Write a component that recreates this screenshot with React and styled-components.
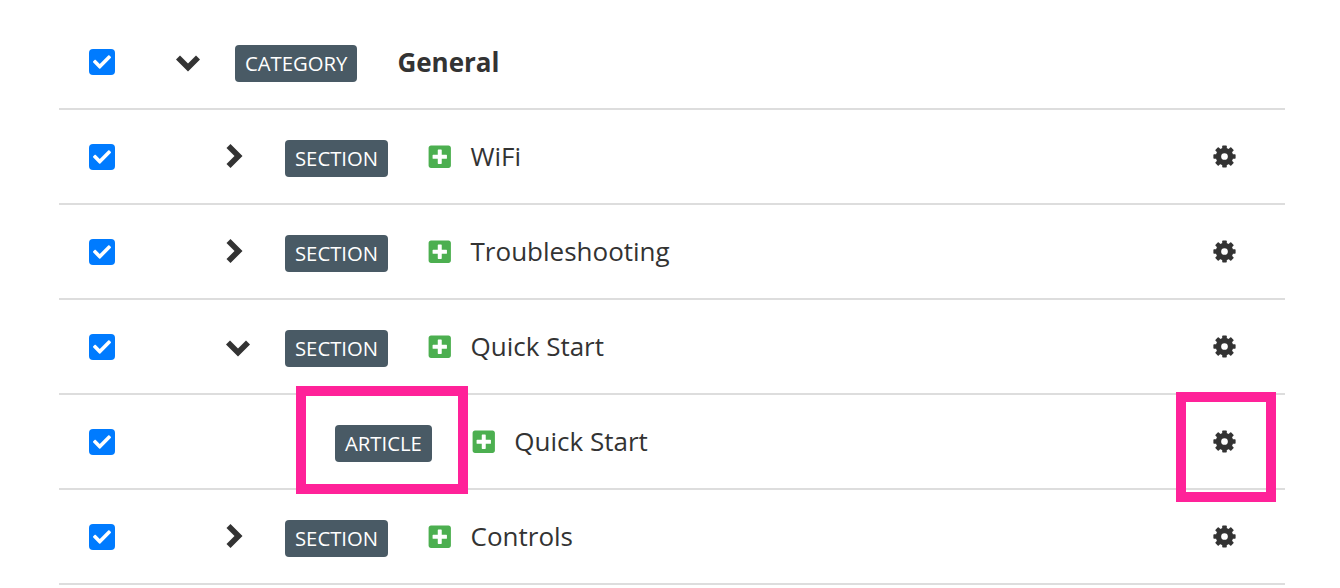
import React from "react";
import styled, { createGlobalStyle } from "styled-components";
import { FaCheck, FaPlusSquare } from "react-icons/fa";

const Global = createGlobalStyle`
  html, body { margin: 0; padding: 0; background: #fff; }
  body { font-family: "Open Sans", "Liberation Sans", sans-serif; color: #333; }
`;

const Page = styled.div`
  position: relative;
  width: 1340px;
  height: 588px;
  overflow: hidden;
  padding: 15px 55px 0 59px;
  box-sizing: border-box;
`;

const Row = styled.div`
  display: flex;
  align-items: center;
  height: 95px;
  box-sizing: border-box;
  padding: 0 49px 0 30px;
  border-bottom: 2px solid #ddd;
`;

const Check = styled.span`
  flex: none;
  width: 26px;
  height: 26px;
  border-radius: 4px;
  background: #007bff;
  color: #fff;
  display: flex;
  align-items: center;
  justify-content: center;
  font-size: 18px;
`;

const Toggle = styled.span`
  flex: none;
  display: flex;
  align-items: center;
  width: 59px;
  margin-left: ${(p) => p.$indent}px;
`;

const Chevron = styled.svg`
  display: block;
  fill: #333;
  margin-top: ${(p) => p.$drop}px;
`;

const Badge = styled.span`
  flex: none;
  box-sizing: border-box;
  height: 37px;
  line-height: 37px;
  margin-top: 4px;
  padding: 0 10px;
  border-radius: 4px;
  background: #495a65;
  color: #fff;
  font-size: 20.3px;
`;

const Plus = styled.span`
  flex: none;
  display: flex;
  margin-left: 39px;
  margin-right: 18px;
  font-size: 25.5px;
  color: #4caf50;
`;

const Name = styled.span`
  flex: 1;
  font-size: 26px;
  color: #333;
  line-height: 34px;
  margin-bottom: 2px;
`;

const CategoryName = styled(Name)`
  margin-left: 40px;
  margin-bottom: 0;
  font-weight: 700;
`;

const GearIcon = styled.svg`
  flex: none;
  display: block;
  width: 23px;
  height: 23px;
  fill: #333;
`;

const Highlight = styled.div`
  position: absolute;
  box-sizing: border-box;
  border: 10px solid #ff2299;
  left: ${(p) => p.$x}px;
  top: ${(p) => p.$y}px;
  width: ${(p) => p.$w}px;
  height: ${(p) => p.$h}px;
`;

const Spacer = styled.span`
  flex: none;
  width: 220px;
`;

const ChevronDown = () => (
  <Chevron $drop={4} width="24" height="17" viewBox="0 0 24 17">
    <polygon points="0,4.5 4,0.5 12,8.5 20,0.5 24,4.5 12,16.5" />
  </Chevron>
);

const ChevronRight = () => (
  <Chevron $drop={-2} width="17" height="24" viewBox="0 0 17 24">
    <polygon points="4.5,0 16.5,12 4.5,24 0.5,20 8.5,12 0.5,4" />
  </Chevron>
);

const Gear = () => (
  <GearIcon viewBox="0 0 24 24">
    <circle cx="12" cy="12" r="6.3" fill="none" stroke="#333" strokeWidth="5.6" />
    {[0, 45, 90, 135, 180, 225, 270, 315].map((a) => (
      <rect key={a} x="9.6" y="0.4" width="4.8" height="5" rx="0.8" transform={`rotate(${a} 12 12)`} />
    ))}
  </GearIcon>
);

function Item({ open, type, name, article }) {
  return (
    <Row>
      <Check><FaCheck /></Check>
      {article ? (
        <Spacer />
      ) : (
        <Toggle $indent={111}>{open ? <ChevronDown /> : <ChevronRight />}</Toggle>
      )}
      <Badge>{type}</Badge>
      <Plus><FaPlusSquare /></Plus>
      <Name>{name}</Name>
      <Gear />
    </Row>
  );
}

export default function App() {
  return (
    <Page>
      <Global />
      <Row>
        <Check><FaCheck /></Check>
        <Toggle $indent={61}><ChevronDown /></Toggle>
        <Badge>CATEGORY</Badge>
        <CategoryName>General</CategoryName>
      </Row>
      <Item type="SECTION" name="WiFi" />
      <Item type="SECTION" name="Troubleshooting" />
      <Item type="SECTION" name="Quick Start" open />
      <Item type="ARTICLE" name="Quick Start" article />
      <Item type="SECTION" name="Controls" />
      <Highlight $x={296} $y={386} $w={172} $h={108} />
      <Highlight $x={1176} $y={392} $w={100} $h={110} />
    </Page>
  );
}
